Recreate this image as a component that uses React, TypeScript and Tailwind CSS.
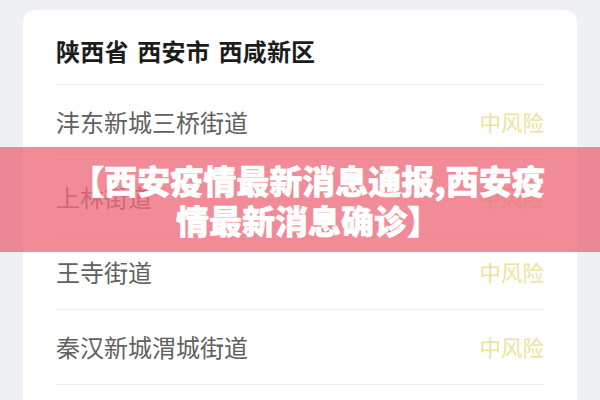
const streets = ["沣东新城三桥街道", "上林街道", "王寺街道", "秦汉新城渭城街道"];

function RiskRow({ name }: { name: string }) {
  return (
    <li className="flex h-[75px] items-center justify-between border-b border-[#ececec]">
      <span className="text-[24px] leading-none text-[#616161]">{name}</span>
      <span className="text-[21.5px] leading-none text-[#ebe39b]">中风险</span>
    </li>
  );
}

export default function App() {
  return (
    <div
      className="relative h-[400px] w-[600px] overflow-hidden bg-[#eef0f3]"
      style={{ fontFamily: '"Noto Sans CJK SC", "Noto Sans", sans-serif' }}
    >
      <div className="mx-[23px] mt-[10px] h-[420px] rounded-[12px] bg-white px-[33px]">
        <div className="flex h-[75px] items-center border-b border-[#ececec] pt-[7px]">
          <h2 className="text-[24px] font-bold leading-none tracking-[0.2px] text-[#1c1c1c] [word-spacing:3px]">
            陕西省 西安市 西咸新区
          </h2>
        </div>
        <ul>
          {streets.map((s) => (
            <RiskRow key={s} name={s} />
          ))}
        </ul>
      </div>

      {/* headline banner laid over the list */}
      <div className="absolute left-0 right-0 top-[147px] flex h-[105px] items-center bg-[rgba(236,106,122,0.78)] pl-[64px] pr-[48px]">
        <p className="w-full text-center text-[33px] font-black leading-[40px] text-white [-webkit-text-stroke:0.6px_white]">
          【西安疫情最新消息通报,西安疫情最新消息确诊】
        </p>
      </div>
    </div>
  );
}
